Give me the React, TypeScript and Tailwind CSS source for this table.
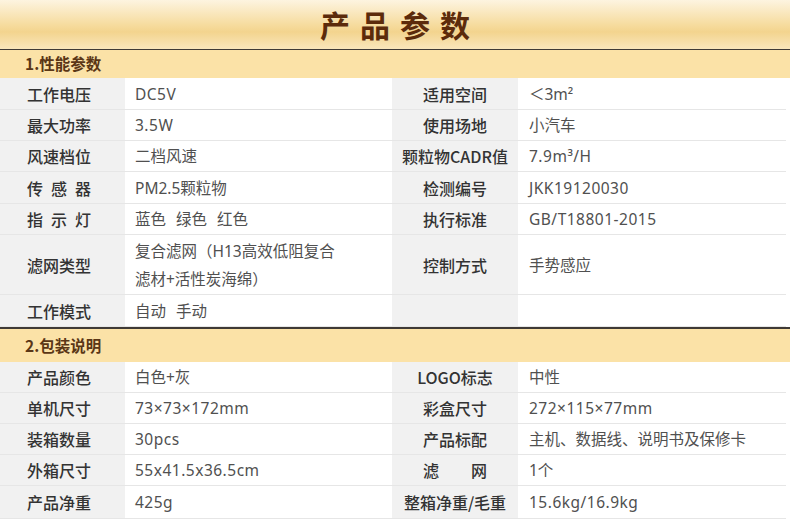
import React from 'react';

type Row = {
  h: string;
  l1: React.ReactNode;
  v1: React.ReactNode;
  l2?: React.ReactNode;
  v2?: React.ReactNode;
};

// 三个字的标签两端对齐
const Spread: React.FC<{ text: string }> = ({ text }) => (
  <span className="inline-flex w-[64px] justify-between">
    {text.split('').map((c, i) => (
      <span key={i}>{c}</span>
    ))}
  </span>
);

const Words: React.FC<{ items: string[] }> = ({ items }) => (
  <span className="flex gap-[10px]">
    {items.map(w => (
      <span key={w}>{w}</span>
    ))}
  </span>
);

const perfRows: Row[] = [
  { h: 'h-[32px]', l1: '工作电压', v1: 'DC5V', l2: '适用空间', v2: '＜3m²' },
  { h: 'h-[31px]', l1: '最大功率', v1: '3.5W', l2: '使用场地', v2: '小汽车' },
  { h: 'h-[31px]', l1: '风速档位', v1: '二档风速', l2: '颗粒物CADR值', v2: '7.9m³/H' },
  { h: 'h-[32px]', l1: <Spread text="传感器" />, v1: 'PM2.5颗粒物', l2: '检测编号', v2: 'JKK19120030' },
  { h: 'h-[31px]', l1: <Spread text="指示灯" />, v1: <Words items={['蓝色', '绿色', '红色']} />, l2: '执行标准', v2: 'GB/T18801-2015' },
  {
    h: 'h-[60px]',
    l1: '滤网类型',
    v1: (
      <span className="leading-[28px]">
        复合滤网（H13高效低阻复合
        <br />
        滤材+活性炭海绵）
      </span>
    ),
    l2: '控制方式',
    v2: '手势感应',
  },
  { h: 'h-[32px]', l1: '工作模式', v1: <Words items={['自动', '手动']} /> },
];

const packRows: Row[] = [
  { h: 'h-[31px]', l1: '产品颜色', v1: '白色+灰', l2: 'LOGO标志', v2: '中性' },
  { h: 'h-[31px]', l1: '单机尺寸', v1: '73×73×172mm', l2: '彩盒尺寸', v2: '272×115×77mm' },
  { h: 'h-[31px]', l1: '装箱数量', v1: '30pcs', l2: '产品标配', v2: '主机、数据线、说明书及保修卡' },
  { h: 'h-[31px]', l1: '外箱尺寸', v1: '55x41.5x36.5cm', l2: '滤　　网', v2: '1个' },
  { h: 'h-[33px]', l1: '产品净重', v1: '425g', l2: '整箱净重/毛重', v2: '15.6kg/16.9kg' },
];

const valueFont = { fontFamily: '"Noto Sans", "Noto Sans CJK SC", sans-serif' };

// 纯英文数字的值稍微拉开字距
const isLatin = (v: React.ReactNode) => typeof v === 'string' && /^[\x20-\x7E×²³]+$/.test(v);

const Value: React.FC<{ v: React.ReactNode; pl: string }> = ({ v, pl }) => (
  <div
    className={`flex items-center bg-white ${pl} text-[15.5px] leading-[22px] text-[#505050] ${isLatin(v) ? 'tracking-[0.5px]' : ''}`}
    style={valueFont}
  >
    {v}
  </div>
);

const TableRow: React.FC<{ row: Row }> = ({ row }) => (
  <div className={`${row.h} mr-[4px] grid grid-cols-[125px_267px_126px_1fr] border-b border-[#e6e6e6]`}>
    <div className="flex items-center justify-center bg-[#f1f1f1] pr-[7px] text-[16px] font-medium text-[#333]">
      {row.l1}
    </div>
    <Value v={row.v1} pl="pl-[10px]" />
    <div className="flex items-center justify-center bg-[#f1f1f1] text-[16px] font-medium text-[#333]">
      {row.l2}
    </div>
    <Value v={row.v2} pl="pl-[11px]" />
  </div>
);

const SectionHeader: React.FC<{ title: string; h: string; line: string }> = ({ title, h, line }) => (
  <div className={`${h} ${line} flex items-center border-[#3f3a36] bg-[#fbe2a7] pl-[25px] text-[15.5px] font-bold text-[#5a3616]`}>
    {title}
  </div>
);

export default function App() {
  return (
    <div
      className="w-[790px] h-[519px] overflow-hidden bg-white"
      style={{ fontFamily: '"Noto Sans CJK SC", "Noto Sans", sans-serif' }}
    >
      <div className="flex h-[49px] items-center justify-center bg-[linear-gradient(180deg,#fdf4e0_0%,#f6dc9f_50%,#f3d48e_65%,#f9e6bb_100%)]">
        <h1 className="pl-[10px] text-[30px] font-bold tracking-[10px] text-[#5c2b0b]">产品参数</h1>
      </div>

      <SectionHeader title="1.性能参数" h="h-[29px]" line="border-t" />
      {perfRows.map((r, i) => (
        <TableRow key={i} row={r} />
      ))}

      <SectionHeader title="2.包装说明" h="h-[35px]" line="border-t-2" />
      {packRows.map((r, i) => (
        <TableRow key={i} row={r} />
      ))}
    </div>
  );
}
